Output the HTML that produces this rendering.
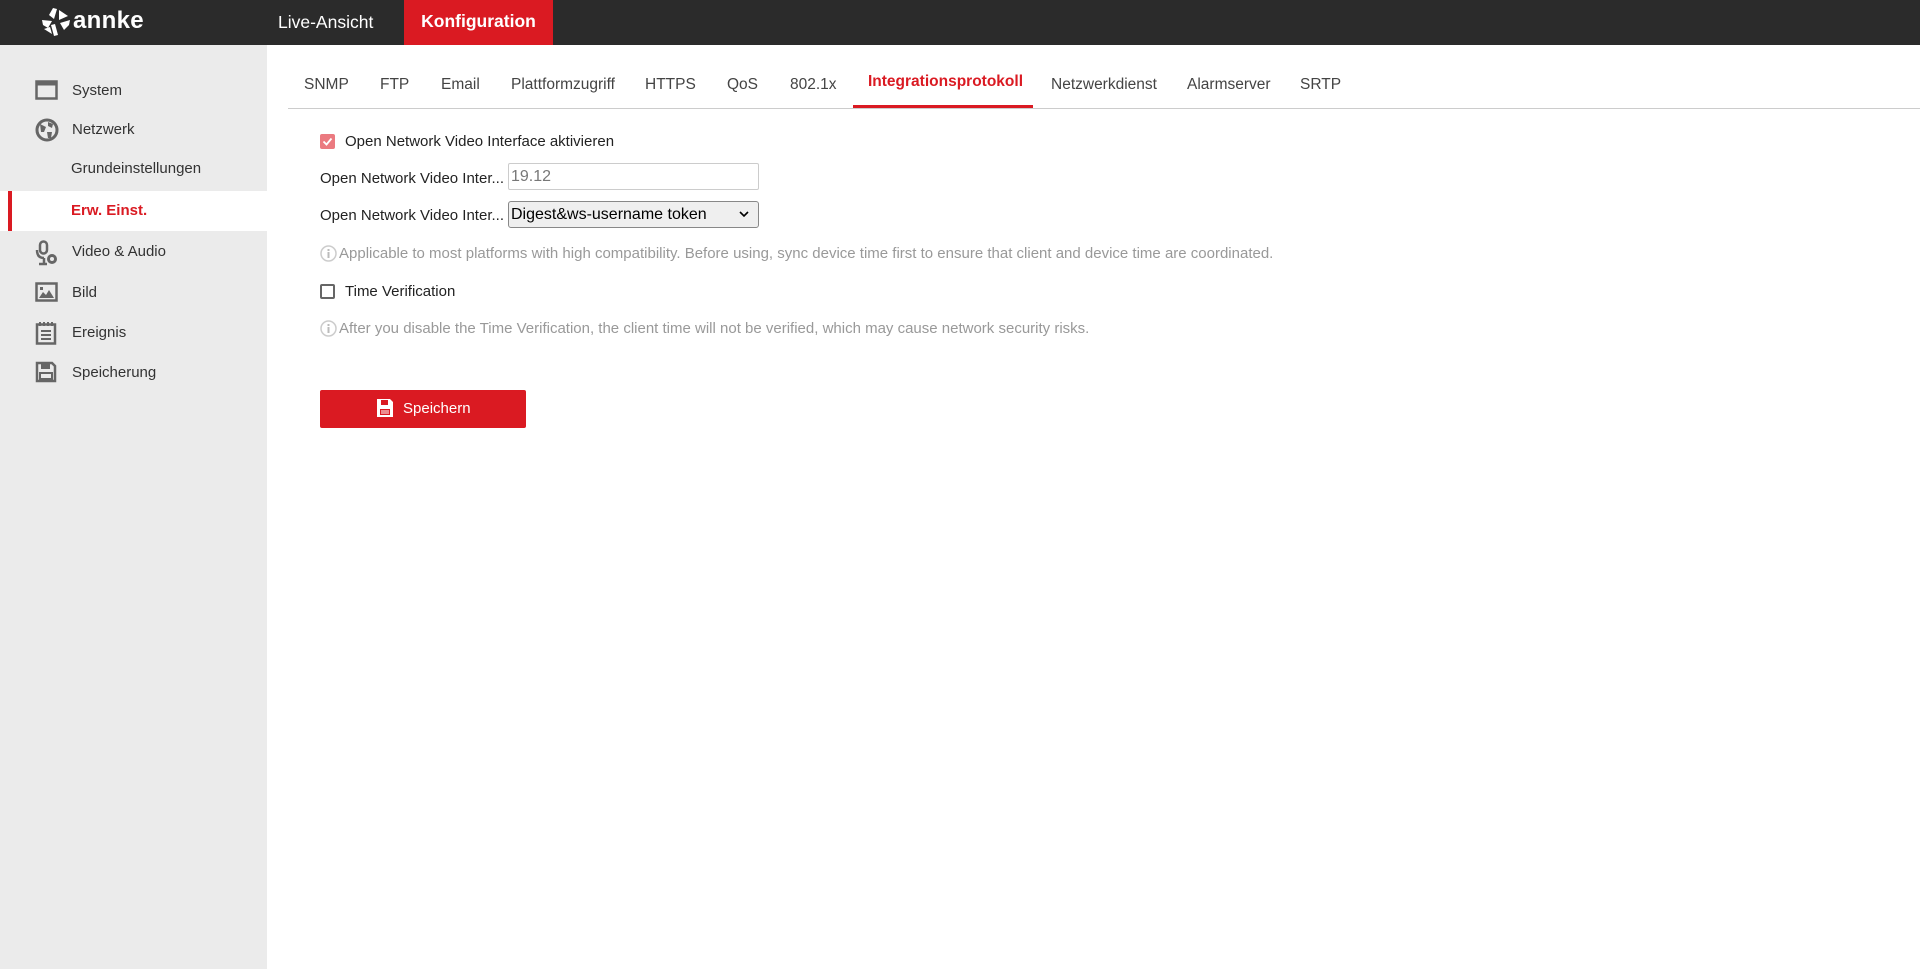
<!DOCTYPE html>
<html><head><meta charset="utf-8"><style>
*{margin:0;padding:0;box-sizing:border-box}
body{width:1920px;height:969px;overflow:hidden;font-family:"Liberation Sans",Arial,sans-serif;background:#fff;position:relative}
.hdr{position:absolute;left:0;top:0;width:1920px;height:45px;background:#2b2b2b}
.abs{position:absolute;white-space:nowrap}
.side{position:absolute;left:0;top:45px;width:267px;height:924px;background:#ebebeb}
.si{position:absolute;font-size:15px;color:#333}
.ic{position:absolute;left:35px}
.tab{position:absolute;top:76px;font-size:15.5px;color:#444}
.lbl{font-size:15px;color:#222}
.info{font-size:15px;color:#999}
</style></head><body>
<div class="hdr">
 <svg class="abs" style="left:40px;top:6px" width="32" height="32" viewBox="0 0 32 32" fill="#fff">
  <path d="M13 2 L17 3 L14 13 L9 9 Z"/><path d="M19 4 L28 10 L19 14 Z"/>
  <path d="M2 14 L12 15 L8 22 L3 19 Z"/><path d="M30 14 L20 17 L24 24 L29 19 Z"/>
  <path d="M11 19 L14 30 L18 29 L15 18 Z"/><path d="M4 23 L12 28 L10 21 Z"/>
 </svg>
 <div class="abs" style="left:73px;top:7px;font-size:24px;font-weight:bold;color:#fff;letter-spacing:0.3px">annke</div>
 <div class="abs" style="left:278px;top:12px;font-size:17.5px;color:#fff">Live-Ansicht</div>
 <div class="abs" style="left:404px;top:0;width:149px;height:45px;background:#da1a22;color:#fff;font-size:17.5px;font-weight:bold;text-align:center;line-height:42px">Konfiguration</div>
</div>
<div class="side"></div>
<div class="abs" style="left:0;top:191px;width:267px;height:40px;background:#fff"></div>
<div class="abs" style="left:8px;top:191px;width:4px;height:40px;background:#da1a22"></div>
<svg class="ic" style="top:80px" width="23" height="20" viewBox="0 0 23 20"><rect x="1.5" y="1.5" width="20" height="17" fill="none" stroke="#666" stroke-width="2.5"/><rect x="1.5" y="1.5" width="20" height="4" fill="#666"/></svg>
<svg class="ic" style="top:118px" width="24" height="24" viewBox="0 0 24 24"><circle cx="12" cy="12" r="10" fill="none" stroke="#666" stroke-width="3"/><path d="M5 6 L11 9 L9 14 L6 14Z M13 4 L18 6 L17 10 L13 8Z M12 14 L17 14 L16 20 L13 20Z" fill="#666"/></svg>
<svg class="ic" style="top:240px" width="24" height="26" viewBox="0 0 24 26"><rect x="5" y="1.5" width="7" height="12" rx="3.5" fill="none" stroke="#666" stroke-width="2.5"/><path d="M2 10 Q2 18 9 18 M9 18 V24 M4 24 H12" fill="none" stroke="#666" stroke-width="2.5"/><circle cx="17" cy="19" r="5" fill="#666"/><circle cx="17" cy="19" r="2" fill="#ebebeb"/></svg>
<svg class="ic" style="top:282px" width="23" height="20" viewBox="0 0 23 20"><rect x="1.5" y="1.5" width="20" height="17" fill="none" stroke="#666" stroke-width="2.5"/><path d="M4 16 L8 10 L11 13 L14 8 L19 16Z" fill="#666"/><rect x="5" y="5" width="3" height="3" fill="#666"/></svg>
<svg class="ic" style="top:321px" width="22" height="24" viewBox="0 0 22 24"><rect x="2" y="3.5" width="18" height="19" fill="none" stroke="#666" stroke-width="2.5"/><path d="M5 1 V5 M9 1 V5 M13 1 V5 M17 1 V5 M6 10 H16 M6 14 H16 M6 18 H16" stroke="#666" stroke-width="2"/></svg>
<svg class="ic" style="top:361px" width="22" height="22" viewBox="0 0 22 22"><path d="M2 2 H17 L20 5 V20 H2 Z" fill="none" stroke="#666" stroke-width="2.5"/><rect x="6" y="2" width="9" height="6" fill="#666"/><rect x="5" y="12" width="12" height="6" fill="none" stroke="#666" stroke-width="2"/></svg>
<div class="si" style="left:72px;top:82px">System</div>
<div class="si" style="left:72px;top:121px">Netzwerk</div>
<div class="si" style="left:71px;top:160px">Grundeinstellungen</div>
<div class="si" style="left:71px;top:202px;color:#da1a22;font-weight:bold">Erw. Einst.</div>
<div class="si" style="left:72px;top:243px">Video &amp; Audio</div>
<div class="si" style="left:72px;top:284px">Bild</div>
<div class="si" style="left:72px;top:324px">Ereignis</div>
<div class="si" style="left:72px;top:364px">Speicherung</div>
<div class="tab" style="left:304px">SNMP</div>
<div class="tab" style="left:380px">FTP</div>
<div class="tab" style="left:441px">Email</div>
<div class="tab" style="left:511px">Plattformzugriff</div>
<div class="tab" style="left:645px">HTTPS</div>
<div class="tab" style="left:727px">QoS</div>
<div class="tab" style="left:790px">802.1x</div>
<div class="tab" style="left:868px;top:73px;color:#da1a22;font-weight:bold">Integrationsprotokoll</div>
<div class="tab" style="left:1051px">Netzwerkdienst</div>
<div class="tab" style="left:1187px">Alarmserver</div>
<div class="tab" style="left:1300px">SRTP</div>
<div class="abs" style="left:288px;top:108px;width:1632px;height:1px;background:#ccc"></div>
<div class="abs" style="left:853px;top:105px;width:180px;height:3px;background:#da1a22"></div>
<div class="abs" style="left:320px;top:134px;width:15px;height:15px;background:#eb7a80;border-radius:2px"><svg width="15" height="15" viewBox="0 0 15 15"><path d="M3.5 7.5 L6.5 10.5 L11.5 4.5" fill="none" stroke="#fff" stroke-width="1.8"/></svg></div>
<div class="abs lbl" style="left:345px;top:133px">Open Network Video Interface aktivieren</div>
<div class="abs lbl" style="left:320px;top:170px">Open Network Video Inter...</div>
<div class="abs" style="left:508px;top:163px;width:251px;height:27px;border:1px solid #ccc;border-radius:2px;font-size:16px;color:#777;padding:4px 2px">19.12</div>
<div class="abs lbl" style="left:320px;top:207px">Open Network Video Inter...</div>
<div class="abs" style="left:508px;top:201px;width:251px;height:27px;border:1px solid #888;border-radius:3px;background:#efefef;font-size:16px;color:#000;padding:4px 2px">Digest&amp;ws-username token<svg style="position:absolute;right:9px;top:9px" width="10" height="7" viewBox="0 0 10 7"><path d="M1 1 L5 5 L9 1" fill="none" stroke="#000" stroke-width="1.6"/></svg></div>
<svg class="abs" style="left:320px;top:245px" width="17" height="17" viewBox="0 0 17 17"><circle cx="8.5" cy="8.5" r="7.5" fill="none" stroke="#ccc" stroke-width="1.5"/><rect x="7.5" y="7" width="2" height="6" fill="#bbb"/><rect x="7.5" y="4" width="2" height="2" fill="#bbb"/></svg>
<div class="abs info" style="left:339px;top:245px">Applicable to most platforms with high compatibility. Before using, sync device time first to ensure that client and device time are coordinated.</div>
<div class="abs" style="left:320px;top:284px;width:15px;height:15px;border:2px solid #666;border-radius:2px"></div>
<div class="abs lbl" style="left:345px;top:283px">Time Verification</div>
<svg class="abs" style="left:320px;top:320px" width="17" height="17" viewBox="0 0 17 17"><circle cx="8.5" cy="8.5" r="7.5" fill="none" stroke="#ccc" stroke-width="1.5"/><rect x="7.5" y="7" width="2" height="6" fill="#bbb"/><rect x="7.5" y="4" width="2" height="2" fill="#bbb"/></svg>
<div class="abs info" style="left:339px;top:320px">After you disable the Time Verification, the client time will not be verified, which may cause network security risks.</div>
<div class="abs" style="left:320px;top:390px;width:206px;height:38px;background:#da1a22;border-radius:2px;color:#fff;font-size:15px;line-height:38px;padding-left:83px">Speichern</div>
<svg class="abs" style="left:376px;top:398px" width="18" height="20" viewBox="0 0 18 20"><path d="M1 1 H14 L17 4 V19 H1 Z" fill="#fff"/><rect x="5" y="2" width="7" height="5" fill="#da1a22"/><rect x="4" y="11" width="10" height="6" fill="#da1a22"/><path d="M5 13 H13 M5 15 H13" stroke="#fff" stroke-width="1"/></svg>
</body></html>
